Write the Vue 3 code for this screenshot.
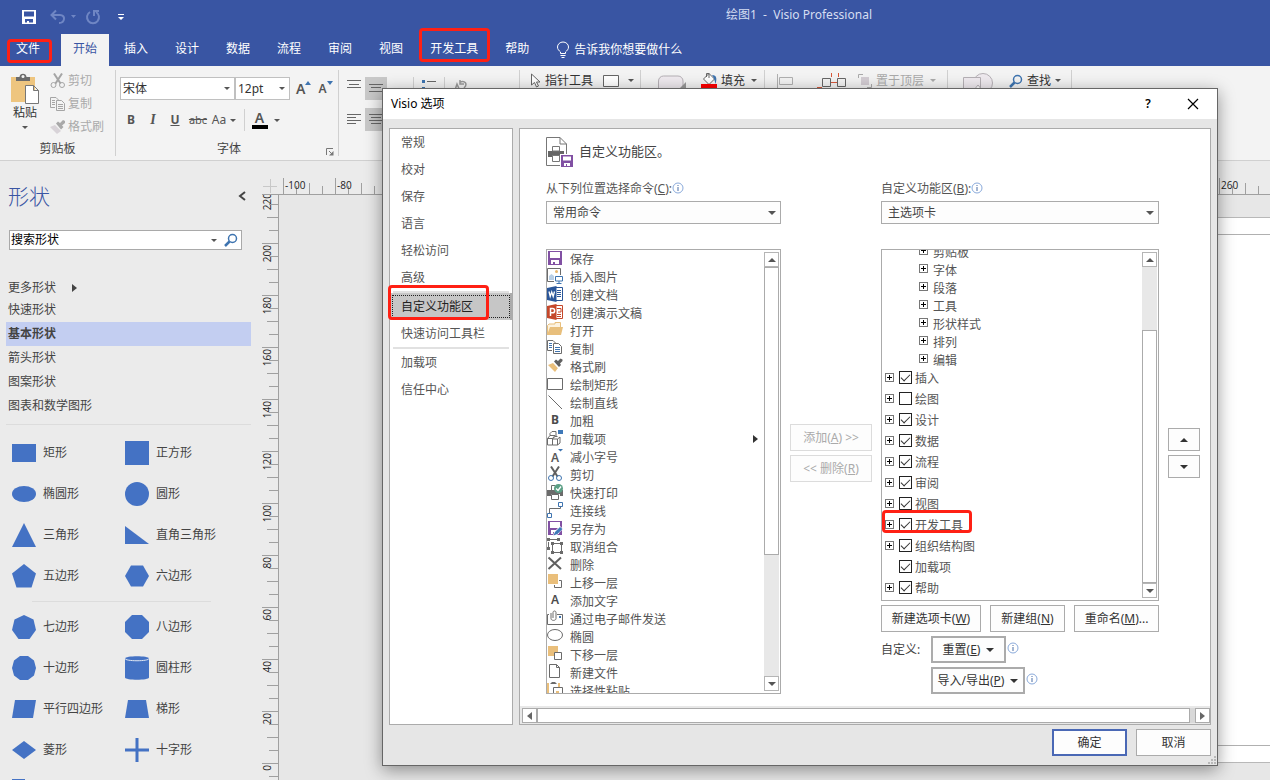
<script setup>
import { ref } from 'vue'

const tabs = ['文件', '开始', '插入', '设计', '数据', '流程', '审阅', '视图', '开发工具', '帮助']
const marked = ['文件', '开发工具']

const stencils = ['快速形状', '基本形状', '箭头形状', '图案形状', '图表和数学图形']

const shapesTop = [
  { name: '矩形', svg: '<rect x="1" y="4" width="24" height="18"/>' },
  { name: '正方形', svg: '<rect x="1" y="1" width="24" height="24"/>' },
  { name: '椭圆形', svg: '<ellipse cx="13" cy="13" rx="12" ry="8"/>' },
  { name: '圆形', svg: '<circle cx="13" cy="13" r="12"/>' },
  { name: '三角形', svg: '<path d="M13 1 25 25H1z"/>' },
  { name: '直角三角形', svg: '<path d="M1 4 25 22H1z"/>' },
  { name: '五边形', svg: '<path d="M13 1 25 10.500 20.500 24.500H5.500L1 10.500z"/>' },
  { name: '六边形', svg: '<path d="M7 2.500H19L25 13 19 23.500H7L1 13z"/>' },
]
const shapesBottom = [
  { name: '七边形', svg: '<path d="M13 1 22.500 5.500 25 16 18.500 25H7.500L1 16 3.500 5.500z"/>' },
  { name: '八边形', svg: '<path d="M8 1H18L25 8V18L18 25H8L1 18V8z"/>' },
  { name: '十边形', svg: '<path d="M9 1H17L23 5.500 25 13 23 20.500 17 25H9L3 20.500 1 13 3 5.500z"/>' },
  { name: '圆柱形', svg: '<path d="M1 3.500C1 .5 25 .5 25 3.500V22.500C25 25.500 1 25.500 1 22.500z"/><path d="M1 3.500C1 6.500 25 6.500 25 3.500" fill="none" stroke="#dfe6f2" stroke-width="1"/>' },
  { name: '平行四边形', svg: '<path d="M4 4H25L22 22H1z"/>' },
  { name: '梯形', svg: '<path d="M4 4H22L25 22H1z"/>' },
  { name: '菱形', svg: '<path d="M13 4 25 13 13 22 1 13z"/>' },
  { name: '十字形', svg: '<path d="M11.500 1H14.500V11.500H25V14.500H14.500V25H11.500V14.500H1V11.500H11.500z"/>' },
  { name: '', svg: '<rect x="1" y="1" width="13" height="22"/>' },
]

const hTicks = Array.from({ length: 100 }, (_, i) => ({ x: 4.5 + i * 13, h: [17, 9, 12, 9][i % 4] }))
const hLabels = [-100, -80, 260].map((t) => ({ t, x: 6 + ((t + 100) / 20) * 52 }))
const vTicks = Array.from({ length: 60 }, (_, i) => ({ y: -3.5 + i * 13, w: [16, 9, 11, 9][i % 4] }))
const vLabels = Array.from({ length: 12 }, (_, i) => ({ y: -2 + i * 52, t: 220 - i * 20 }))

const navItems = [
  { t: '常规' }, { t: '校对' }, { t: '保存' }, { t: '语言' }, { t: '轻松访问' }, { t: '高级', sep: true },
  { t: '自定义功能区', on: true }, { t: '快速访问工具栏', sep: true }, { t: '加载项' }, { t: '信任中心' },
]

const floppy = '<path fill="#8150a3" fill-rule="evenodd" d="M1 1H15V15H1zM3 2V8H13V2zM4 10V14H6V12H8V14H12V10z"/>'
const commands = [
  { t: '保存', i: floppy },
  { t: '插入图片', i: '<path d="M7 13.500H.5V.5H13.500V7" stroke="#6b6b6b"/><circle cx="9.500" cy="3.500" r="1.500" fill="#eab76c"/><path d="M2 12V8L4.500 6 7 8V12z" fill="#b9cfe6"/><path d="M8.500 8.500H15.500V13H8.500zM12 13V15.500M9.500 15.500H14.500" stroke="#3e74b0" fill="#fff"/>' },
  { t: '创建文档', i: '<path d="M9 1.500H15.500V14.500H9" stroke="#2a5699" fill="#fff"/><path d="M10 4.500H14M10 6.500H14M10 8.500H14M10 10.500H14" stroke="#2a5699"/><path d="M0 2 9.500 0V16L0 14z" fill="#2a5699"/><path d="M2 5.500 3.200 10.500 4.700 6 6.200 10.500 7.500 5.500" stroke="#fff" stroke-width="1.300"/>' },
  { t: '创建演示文稿', i: '<path d="M9 1.500H15.500V14.500H9" stroke="#c5472a" fill="#fff"/><path d="M10 4.500H14V8H11M10 10.500H14M10 12.500H14" stroke="#c5472a"/><path d="M0 2 9.500 0V16L0 14z" fill="#c5472a"/><path d="M3.500 12V4.500H5.500a2 2 0 0 1 0 4.300H3.500" stroke="#fff" stroke-width="1.500"/>' },
  { t: '打开', i: '<path d="M.5 13V3.500L2 2H8V.5H13.500V5" stroke="#e8bf7c" fill="#fdf3e0"/><path d="M0 13 3 5H16L14 13z" fill="#e8bf7c"/>' },
  { t: '复制', i: '<path d="M5 10.500H.5V.5H6L8.500 3" stroke="#6b6b6b"/><path d="M2 3.500H5M2 5.500H5M2 7.500H5" stroke="#3e74b0"/><path d="M6.500 3.500H11.500L14.500 6.500V13.500H6.500z" stroke="#6b6b6b" fill="#fff"/><path d="M8 7.500H13M8 9.500H13M8 11.500H13" stroke="#3e74b0"/>' },
  { t: '格式刷', i: '<path d="M1 7 6 5 11 10 8 14z" fill="#eabf7b"/><path d="M6 4 8 3 13 8 11 10z" fill="#fff"/><path d="M7 3.500 9 1.500 11 3 13.500 .5 15.500 1.500 15.500 3 13 5.500 14 7 12 9z" fill="#606060"/>' },
  { t: '绘制矩形', i: '<path d="M.5 2.500H15.500V13.500H.5z" stroke="#6b6b6b"/>' },
  { t: '绘制直线', i: '<path d="M1.500 1.500 15 15" stroke="#6b6b6b"/>' },
  { t: '加粗', i: '<text x="4" y="12" font-size="12" font-weight="700" fill="#4c4c4c">B</text>' },
  { t: '加载项', sub: true, i: '<path d="M.5 8.500H5.500V15H.5zM5.500 9H10.500V15H5.500M.5 8.500 3 5.500V3.500L5 1.500H9V6M3 5.500H8L5.500 8.500M10.500 9 13 7V13L10.500 15M5.500 9 8 6.500H10.500" stroke="#6b6b6b"/><rect x="11" y="0" width="5" height="4" fill="#3e78b8"/>' },
  { t: '减小字号', i: '<text x="4" y="14" font-size="12" font-weight="600" fill="#5a5a5a">A</text><path d="M11 1H16L13.500 3.500z" fill="#3e74b0"/>' },
  { t: '剪切', i: '<path d="M4 .5 10.500 10.500M12 .5 5.500 10.500" stroke="#5f5f5f" stroke-width="2"/><circle cx="4" cy="12" r="2.500" stroke="#3e74b0"/><circle cx="12" cy="12" r="2.500" stroke="#3e74b0"/>' },
  { t: '快速打印', i: '<path d="M4.500 6V1.500H8" stroke="#6b6b6b"/><path d="M0 6H16V12H13V10H4V12H0z" fill="#6b6b6b"/><path d="M4.500 10.500H11.500V15.500H4.500z" stroke="#6b6b6b" fill="#fff"/><circle cx="11.500" cy="4.500" r="4.500" fill="#5b9f85"/><path d="M9 4.500 11 6.500 14 2.500" stroke="#fff" stroke-width="1.300"/>' },
  { t: '连接线', i: '<path d="M2.500 11V6.500H13.500V5" stroke="#6b6b6b"/><path d="M.5 11.500H4.500V15.500H.5zM11.500 .5H15.500V4.500H11.500z" stroke="#3e74b0"/>' },
  { t: '另存为', i: floppy + '<path d="M6 16 7 12 13 6 16 9 10 15z" fill="#fff"/><path d="M6.500 15.500 8 12 13 7 15.500 9 10.500 14z" fill="#3e78b8"/>' },
  { t: '取消组合', i: '<path d="M5 1.500H11M1.500 4V10M2 1.500H11M11.500 1V3" stroke="#6b6b6b"/><path d="M5.500 5.500H14.500V14.500H5.500z" stroke="#6b6b6b"/><path d="M0 0H3V3H0zM10 0H13V3H10zM0 9H3V12H0zM4 4H7V7H4zM13 4H16V7H13zM4 13H7V16H4zM13 13H16V16H13z" fill="#6b6b6b"/>' },
  { t: '删除', i: '<path d="M1.500 1.500 14 13M14 1.500 1.500 13" stroke="#606060" stroke-width="2"/>' },
  { t: '上移一层', i: '<rect x="1" y="0" width="10" height="10" fill="#eabf7b"/><path d="M12 6.500H14.500V13.500H7.500V11" stroke="#6b6b6b"/>' },
  { t: '添加文字', i: '<text x="4" y="12" font-size="12" font-weight="600" fill="#4c4c4c">A</text>' },
  { t: '通过电子邮件发送', i: '<path d="M2 4.500H.5V14.500H15.500V4.500H10" stroke="#6b6b6b"/><path d="M4 3V8.500C4 11 9 11 9 8.500V2.500C9 .5 6 .5 6 2.500V8" stroke="#6b6b6b"/><rect x="12" y="6" width="2" height="2" fill="#3e74b0"/>' },
  { t: '椭圆', i: '<ellipse cx="8" cy="7" rx="7.500" ry="5.500" stroke="#6b6b6b"/>' },
  { t: '下移一层', i: '<rect x="1" y="0" width="10" height="10" fill="#eabf7b"/><path d="M7.500 6.500H14.500V13.500H7.500z" stroke="#6b6b6b" fill="#fff"/>' },
  { t: '新建文件', i: '<path d="M2.500 .5H9.500L12.500 3.500V13.500H2.500zM9.500 .5V3.500H12.500" stroke="#6b6b6b"/>' },
  { t: '选择性粘贴', i: '<path d="M0 1H2V12H0zM11 1H13V5H11z" fill="#eabf7b"/><path d="M3 2 5 0H8L10 2z" fill="#6b6b6b"/><path d="M6.500 5.500H15.500V13H6.500z" stroke="#6b6b6b" fill="#fff"/><path d="M9 9H12V11H9z" fill="#eabf7b"/>' },
]

const groups = ['剪贴板', '字体', '段落', '工具', '形状样式', '排列', '编辑']
const tree = ref([
  { t: '插入', on: true }, { t: '绘图', on: false }, { t: '设计', on: true }, { t: '数据', on: true },
  { t: '流程', on: true }, { t: '审阅', on: true }, { t: '视图', on: true }, { t: '开发工具', on: true, mark: true },
  { t: '组织结构图', on: true }, { t: '加载项', on: true, leaf: true }, { t: '帮助', on: true },
])
const font = ref('宋体')
const size = ref('12pt')
const search = ref('搜索形状')
const source = ref('常用命令')
const target = ref('主选项卡')
</script>

<template>
  <div class="app">
    <header class="titlebar">
      <div class="qat">
        <button class="ico" aria-label="保存">
          <svg width="16" height="16" viewBox="0 0 16 16"><path fill="#fff" fill-rule="evenodd" d="M1 1H15V15H1zM3 2.500V7.500H13V2.500zM4 10V13.500H6V12H8V13.500H12V10z" /></svg>
        </button>
        <button class="ico undo" aria-label="撤消">
          <svg width="28" height="16" viewBox="0 0 28 16" fill="none" stroke="#6f86c4" stroke-width="2"><path d="M2 6H10C16 6 15 14 9 14M6 1.500 1.500 6 6 10.500" /><path d="M21 6H26L23.500 9z" fill="#6f86c4" stroke="none" /></svg>
        </button>
        <button class="ico redo" aria-label="恢复">
          <svg width="16" height="16" viewBox="0 0 16 16" fill="none" stroke="#6f86c4" stroke-width="2"><path d="M5 3A6 6 0 1 0 11 3M9 7V2H14" /></svg>
        </button>
        <button class="ico custom" aria-label="自定义快速访问工具栏">
          <svg width="8" height="8" viewBox="0 0 8 8" fill="#fff"><path d="M1 1H7V2H1zM1 4H7L4 7z" /></svg>
        </button>
      </div>
      <h1>绘图1 &nbsp;-&nbsp; Visio Professional</h1>
    </header>

    <nav class="tabs">
      <button v-for="t in tabs" :key="t" :class="{ active: t === '开始', file: t === '文件' }">
        {{ t }}<i v-if="marked.includes(t)" class="mark" :class="t === '文件' ? 'mark-file' : 'mark-dev'"></i>
      </button>
      <button class="tell">
        <svg width="14" height="18" viewBox="0 0 14 18" fill="none" stroke="#fff"><path d="M4.500 12.500V11C3 9.500 1.500 8.500 1.500 6a5.500 5 0 0 1 11 0C12.500 8.500 11 9.500 9.500 11V12.500zM4.500 14.500H9.500M5.500 16.500H8.500" /></svg>
        告诉我你想要做什么
      </button>
    </nav>

    <section class="ribbon">
      <div class="group clip">
        <div class="clip-body">
          <button class="paste">
            <svg width="30" height="32" viewBox="0 0 30 32"><path d="M1 4H25V29H1z" fill="#eec57f" /><path d="M6 8V4H9.500C9.500-.5 16.500-.5 16.500 4H20V8z" fill="#6b6b6b" /><circle cx="13" cy="3.500" r="1.500" fill="#f3f3f3" /><path d="M15.500 12.500H23.500L28.500 17.500V30.500H15.500zM23.500 12.500V17.500H28.500" fill="#fff" stroke="#777" /></svg>
            <span>粘贴</span><b class="caret"></b>
          </button>
          <div class="cmds">
            <button disabled><svg width="16" height="16" viewBox="0 0 16 16" fill="none" stroke="#a5a5a5"><path d="M4 .5 10.500 10.500M12 .5 5.500 10.500" stroke-width="2" /><circle cx="3.500" cy="12" r="2.500" /><circle cx="12" cy="12" r="2.500" /></svg>剪切</button>
            <button disabled><svg width="16" height="16" viewBox="0 0 16 16" fill="none" stroke="#a5a5a5"><path d="M5 11.500H.5V1.500H6L8.500 4M2 4.500H5M2 6.500H5M2 8.500H5M6.500 4.500H11.500L14.500 7.500V14.500H6.500zM8 8.500H13M8 10.500H13M8 12.500H13" /></svg>复制</button>
            <button disabled><svg width="16" height="16" viewBox="0 0 16 16"><path d="M0 8 5 6 11 12 7 15z" fill="#d8d3d8" /><path d="M6 4.500 8 2.500 10 4 13 1 15 2 15 4 12 6.500 13.500 8 11 10.500z" fill="#a9a9a9" /></svg>格式刷</button>
          </div>
        </div>
        <div class="gname">剪贴板</div>
      </div>

      <div class="group fontg">
        <div class="frow">
          <label class="combo cfont"><select v-model="font" aria-label="字体"><option>宋体</option></select></label>
          <label class="combo csize"><select v-model="size" aria-label="字号"><option>12pt</option></select></label>
          <button class="grow" aria-label="增大字号">A<svg width="6" height="4"><path d="M0 4H6L3 0z" fill="#3e74b0" /></svg></button>
          <button class="grow small" aria-label="减小字号">A<svg width="6" height="4"><path d="M0 0H6L3 4z" fill="#3e74b0" /></svg></button>
        </div>
        <div class="frow2">
          <button><b>B</b></button><button><em>I</em></button><button><u><b>U</b></u></button>
          <button class="abc"><s>abc</s></button><button class="aa">Aa<b class="caret"></b></button>
          <button class="fcolor"><span>A</span><b class="caret"></b></button>
        </div>
        <div class="gname">字体<svg class="launch" width="8" height="8" viewBox="0 0 8 8" fill="none" stroke="#777"><path d="M.5 7V.5H7M3 3 6 6" /><path d="M7.500 3V7.500H3z" fill="#777" stroke="none" /></svg></div>
      </div>

      <div class="group para">
        <div class="prow">
          <button aria-label="顶端对齐"><svg width="16" height="17" stroke="#666"><path d="M1 .5H15M3 4.500H13M1 7.500H15" /></svg></button>
          <button class="on" aria-label="中部对齐"><svg width="16" height="17" stroke="#666"><path d="M1 4.500H15M3 7.500H13M1 11.500H15" /></svg></button>
          <i class="vsep"></i>
          <button class="bul" aria-label="项目符号"><svg width="16" height="17" fill="#3e74b0"><path d="M1 0H4V3H1zM1 7H4V10H1z" /><path d="M6 1.500H15M6 8.500H15" stroke="#666" /></svg></button>
          <i class="vsep"></i>
          <button aria-label="旋转文字"><svg width="16" height="17" fill="none" stroke="#999"><path d="M2 13 5 4 8 11M8 2C13 0 16 4 12 8M8 0V4H12" stroke-width="1.500" /></svg></button>
        </div>
        <div class="prow low">
          <button aria-label="左对齐"><svg width="16" height="14" stroke="#666"><path d="M1 1.500H15M1 4.500H10M1 7.500H15M1 10.500H10" /></svg></button>
          <button class="on" aria-label="居中"><svg width="16" height="14" stroke="#666"><path d="M1 1.500H15M3 4.500H13M1 7.500H15M3 10.500H13" /></svg></button>
        </div>
      </div>

      <div class="group tools">
        <div class="line">
          <button><svg width="12" height="16" viewBox="0 0 12 16" fill="#fff" stroke="#666"><path d="M1.500 1V12L4.500 9.500 6.500 14 8.500 13 6.500 9H10z" /></svg>指针工具</button>
          <button class="sq" aria-label="矩形"><svg width="16" height="12"><path d="M.5 .5H15.500V11.500H.5z" fill="#fff" stroke="#666" /></svg><b class="caret"></b></button>
        </div>
      </div>

      <div class="group style">
        <div class="line">
          <button class="round" aria-label="快速样式"><svg width="30" height="18" viewBox="0 0 30 18"><path d="M1.500 18V9a5 5 0 0 1 5-5H21a5 5 0 0 1 5 5V18" fill="#efeaef" stroke="#b5b0b5" /><path d="M29 10V18H21z" fill="#999" /></svg></button>
          <button><svg width="18" height="18" viewBox="0 0 18 18"><path d="M3.500 7 9 1.500 14.500 7 9 12.500z" fill="#fff" stroke="#666" /><path d="M6.500 5V1.500H9V6" fill="none" stroke="#666" /><path d="M12 3C17 3 17 7 15.500 12 14.500 8 14 6 12 3" fill="#3e74b0" /><path d="M1 12H17V18H1z" fill="#f00" /></svg>填充<b class="caret"></b></button>
        </div>
      </div>

      <div class="group arrange">
        <div class="line">
          <button aria-label="对齐"><svg width="18" height="16" fill="none" stroke="#b0b0b0"><path d="M1.500 1V16M3.500 4.500H16.500V11.500H3.500z" /></svg></button>
          <button class="pos" aria-label="位置"><svg width="32" height="18" viewBox="0 0 32 18" fill="none" stroke="#666"><path d="M14 10.500H20M14.500 1V5M21.500 1V5M0 15.500H5M10.500 16V18" stroke="#d8583a" /><path d="M5.500 6.500H13.500V14.500H5.500zM20.500 6.500H28.500V14.500H20.500z" /></svg></button>
          <button disabled><svg width="16" height="16" viewBox="0 0 16 16" fill="none" stroke="#aaa"><path d="M1.500 5V1.500H6M14.500 11V14.500H10" /><path d="M4 4H12V12H4z" fill="#d3cdd3" stroke="none" /></svg>置于顶层<b class="caret"></b></button>
        </div>
      </div>

      <div class="group edit">
        <div class="line">
          <button aria-label="更改形状"><svg width="32" height="18" viewBox="0 0 32 18" fill="#efeaef" stroke="#b5b0b5"><circle cx="20" cy="11" r="9.500" /><path d="M.5 5.500H17.500V18H.5z" /><path d="M11 18 15 13 19 18z" fill="#fff" /></svg></button>
          <button class="find"><svg width="14" height="14" viewBox="0 0 14 14" fill="none" stroke="#3e74b0"><circle cx="8.500" cy="5.500" r="4" stroke-width="1.500" /><path d="M5.500 8.500 1 13" stroke-width="2.500" /></svg>查找<b class="caret"></b></button>
        </div>
      </div>
    </section>

    <main class="workspace">
      <aside class="pane">
        <div class="pane-head"><h2>形状</h2><button aria-label="最小化形状窗口"><svg width="8" height="10" fill="none" stroke="#444" stroke-width="2"><path d="M7 1 2 5 7 9" /></svg></button></div>
        <div class="search">
          <input v-model="search" aria-label="搜索形状" />
          <b class="caret"></b>
          <button aria-label="搜索"><svg width="14" height="14" viewBox="0 0 14 14" fill="none" stroke="#3e74b0"><circle cx="8.500" cy="5.500" r="4" stroke-width="1.500" /><path d="M5.500 8.500 1 13" stroke-width="2.500" /></svg></button>
        </div>
        <button class="more">更多形状<svg width="5" height="8"><path d="M0 0V8L5 4z" fill="#444" /></svg></button>
        <ul class="stencils"><li v-for="s in stencils" :key="s" :class="{ sel: s === '基本形状' }">{{ s }}</li></ul>
        <div class="shapes">
          <div v-for="s in shapesTop" :key="s.name" class="shape"><svg width="26" height="26" fill="#4472c4" v-html="s.svg"></svg>{{ s.name }}</div>
        </div>
        <hr />
        <div class="shapes second">
          <div v-for="s in shapesBottom" :key="s.name" class="shape"><svg width="26" height="26" fill="#4472c4" v-html="s.svg"></svg>{{ s.name }}</div>
        </div>
      </aside>

      <div class="drawing">
        <svg class="corner" width="17" height="17" stroke="#c8c8c8"><path d="M1 8.500H15M8.500 1V15" /><path d="M0 16.500H17" stroke="#a0a0a0" /></svg>
        <svg class="hruler" width="100%" height="17">
          <path d="M0 16.500H2000" stroke="#a0a0a0" />
          <line v-for="k in hTicks" :key="k.x" :x1="k.x" :x2="k.x" :y1="17 - k.h" y2="17" stroke="#a0a0a0" />
          <text v-for="l in hLabels" :key="l.t" :x="l.x" y="11" class="rl">{{ l.t }}</text>
        </svg>
        <svg class="vruler" width="17" height="100%">
          <path d="M16.500 0V2000" stroke="#a0a0a0" />
          <line v-for="k in vTicks" :key="k.y" :x1="16 - k.w" x2="16" :y1="k.y" :y2="k.y" stroke="#a0a0a0" />
          <text v-for="l in vLabels" :key="l.t" text-anchor="end" :transform="`translate(9 ${l.y}) rotate(-90)`" class="rl">{{ l.t }}</text>
        </svg>
        <div class="canvas"><div class="sheet"><div class="page"></div></div></div>
      </div>
    </main>

    <div class="dialog" role="dialog" aria-labelledby="dlg-title">
      <div class="dlg-title">
        <span id="dlg-title">Visio 选项</span>
        <button class="help" aria-label="帮助">?</button>
        <button class="close" aria-label="关闭"><svg width="12" height="12" stroke="#000" stroke-width="1.200"><path d="M1 1 11 11M11 1 1 11" /></svg></button>
      </div>

      <div class="dlg-body">
        <ul class="nav">
          <li v-for="n in navItems" :key="n.t" :class="{ sep: n.sep }">
            <button :class="{ on: n.on }">{{ n.t }}</button>
            <i v-if="n.on" class="mark mark-nav"></i>
          </li>
        </ul>

        <div class="content">
          <div class="scrollarea">
            <div class="heading">
              <svg width="28" height="31" viewBox="0 0 28 31" fill="none" stroke="#777"><path d="M15 28.500H.5V.5H14L20.500 7V17M14 .5V7H20.500" /><path d="M2 14H18V20H2z" fill="#666" stroke="none" /><path d="M6.500 9.500H13.500V14H6.500zM6.500 18.500H13.500V24.500H6.500z" fill="#fff" /><path d="M14 17H28V31H14z" fill="#fff" stroke="none" /><path fill="#8150a3" stroke="none" fill-rule="evenodd" d="M15 18H27V30H15zM17 19.500V23.500H25V19.500zM18 26V29H20V27H21V29H24V26z" /></svg>
              <h3>自定义功能区。</h3>
            </div>

            <div class="cols">
              <div class="col">
                <div class="lab"><label for="src">从下列位置选择命令(<u>C</u>):</label><svg class="info" width="12" height="12"><use href="#info" /></svg></div>
                <div class="combo big"><select id="src" v-model="source"><option>常用命令</option></select></div>
                <div class="list">
                  <ul class="items">
                    <li v-for="c in commands" :key="c.t"><svg width="16" height="16" fill="none" v-html="c.i"></svg><span>{{ c.t }}</span><svg v-if="c.sub" class="sub" width="5" height="8"><path d="M0 0V8L5 4z" fill="#333" /></svg></li>
                  </ul>
                  <div class="vsb"><button aria-label="向上滚动"><b class="caret up"></b></button><span class="thumb left"></span><span class="rest"></span><button aria-label="向下滚动"><b class="caret"></b></button></div>
                </div>
              </div>

              <div class="mid">
                <button disabled>添加(<u>A</u>) &gt;&gt;</button>
                <button disabled>&lt;&lt; 删除(<u>R</u>)</button>
              </div>

              <div class="col">
                <div class="lab"><label for="dst">自定义功能区(<u>B</u>):</label><svg class="info" width="12" height="12"><use href="#info" /></svg></div>
                <div class="combo big"><select id="dst" v-model="target"><option>主选项卡</option></select></div>
                <div class="list">
                  <ul class="tree">
                    <li v-for="g in groups" :key="g" class="g"><i class="plus"></i><span>{{ g }}</span></li>
                    <li v-for="n in tree" :key="n.t" class="t">
                      <i class="plus" :class="{ none: n.leaf }"></i>
                      <label><input v-model="n.on" type="checkbox" /><span>{{ n.t }}</span></label>
                      <i v-if="n.mark" class="mark mark-tree"></i>
                    </li>
                  </ul>
                  <div class="vsb"><button aria-label="向上滚动"><b class="caret up"></b></button><span class="gap"></span><span class="thumb right"></span><button aria-label="向下滚动"><b class="caret"></b></button></div>
                </div>
                <div class="acts"><button class="w1">新建选项卡(<u>W</u>)</button><button class="w2">新建组(<u>N</u>)</button><button class="w3">重命名(<u>M</u>)...</button></div>
                <div class="acts2">
                  <span>自定义:</span>
                  <div><button class="w2 thick"><span>重置(<u>E</u>)</span><b class="caret big-caret"></b></button><svg class="info" width="12" height="12"><use href="#info" /></svg></div>
                  <div class="second-row"><button class="w4 thick"><span>导入/导出(<u>P</u>)</span><b class="caret big-caret"></b></button><svg class="info" width="12" height="12"><use href="#info" /></svg></div>
                </div>
              </div>

              <div class="updown">
                <button aria-label="上移"><b class="caret up"></b></button>
                <button aria-label="下移"><b class="caret"></b></button>
              </div>
            </div>
          </div>
          <div class="hsb"><button aria-label="向左滚动"><svg width="5" height="8"><path d="M5 0V8L0 4z" fill="#666" /></svg></button><span class="hthumb"></span><i></i><button aria-label="向右滚动"><svg width="5" height="8"><path d="M0 0V8L5 4z" fill="#666" /></svg></button></div>
        </div>
      </div>

      <div class="dlg-foot"><button class="ok">确定</button><button>取消</button></div>
      <svg class="grip" width="9" height="9" fill="#b8b8b8"><path d="M6 0H8V2H6zM3 3H5V5H3zM6 3H8V5H6zM0 6H2V8H0zM3 6H5V8H3zM6 6H8V8H6z" /></svg>
    </div>

    <svg class="defs" width="0" height="0"><symbol id="info" viewBox="0 0 12 12"><circle cx="6" cy="6" r="5" fill="#fff" stroke="#8aaadb" /><path d="M5.500 3H6.500V4H5.500zM5.500 5H6.500V9H5.500z" fill="#4a6ea8" /></symbol></svg>
  </div>
</template>

<style>
html, body { margin: 0; overflow: hidden; }
</style>

<style scoped>
.app { position: relative; display: flex; flex-direction: column; height: 100vh; overflow: hidden; background: #ebebeb; color: #444; font: 12px/18px "Noto Sans", "Noto Sans CJK SC", sans-serif; }
.app * { box-sizing: border-box; }
button, select, input { font: inherit; color: inherit; padding: 0; margin: 0; border: 0; background: none; border-radius: 0; }
button { display: flex; align-items: center; justify-content: center; white-space: nowrap; }
h1, h2, h3, ul { margin: 0; padding: 0; font-weight: 400; font-size: 12px; list-style: none; }
svg { display: block; flex: none; }
.defs { position: absolute; }
.caret { flex: none; width: 0; height: 0; border: 3px solid transparent; border-top-color: #555; border-bottom-width: 0; }
.caret.up { border-bottom: 4px solid #555; border-top-width: 0; }
.mark { position: absolute; border: 3px solid #ff2014; border-radius: 4px; pointer-events: none; z-index: 2; }

.titlebar { display: flex; align-items: center; height: 34px; background: #3955a3; color: #d6def2; }
.titlebar h1 { flex: 1; text-align: center; padding-bottom: 4px; }
.qat { display: flex; align-items: center; width: 328px; padding-left: 21px; }
.undo { margin-left: 13px; }
.redo { margin-left: 7px; }
.custom { margin-left: 16px; }

.tabs { display: flex; gap: 3px; height: 32px; padding-left: 4px; background: #3955a3; color: #fff; }
.tabs button { position: relative; padding: 0 12px 2px; }
.tabs .file { margin-right: 6px; }
.tabs .active { background: #f3f3f3; color: #3955a3; }
.tabs .tell { gap: 4px; padding: 0 12px; }
.mark-file { inset: 5px 0 3px 3px; }
.mark-dev { inset: -6px 0 4px 1px; }

.ribbon { display: flex; height: 95px; flex: none; background: #f3f3f3; border-bottom: 1px solid #d0d0d0; padding: 4px 0; }
.group { position: relative; display: flex; flex-direction: column; border-right: 1px solid #d0d0d0; overflow: hidden; }
.gname { margin-top: auto; text-align: center; line-height: 14px; }
.group button { color: #333; }
.clip { width: 116px; }
.clip-body { display: flex; height: 68px; }
.paste { flex-direction: column; justify-content: flex-start; width: 50px; padding-top: 3px; }
.paste span { line-height: 16px; }
.paste .caret { margin-top: 5px; }
.cmds { display: flex; flex-direction: column; gap: 5px; padding-top: 2px; }
.cmds button { gap: 2px; justify-content: flex-start; }
.group button:disabled { color: #aaa; }
button:disabled .caret { border-top-color: #aaa; }
.fontg { width: 223px; padding-left: 4px; }
.frow { display: flex; padding-top: 7px; }
.combo { position: relative; display: flex; height: 23px; border: 1px solid #c0c0c0; background: #fff; }
.combo::after { content: ""; position: absolute; right: 4px; top: 9px; border: 3px solid transparent; border-top-color: #555; border-bottom-width: 0; }
.combo select { appearance: none; width: 100%; padding-left: 2px; outline: none; color: #333; }
.cfont { width: 115px; }
.csize { width: 55px; }
.grow { align-items: flex-start; margin-left: 6px; font-size: 14px; font-weight: 600; line-height: 24px; }
.grow.small { font-size: 12px; margin-left: 7px; }
.group .grow { color: #555; }
.grow svg { margin-top: 4px; }
.frow2 { display: flex; padding-top: 8px; }
.frow2 button { width: 22px; height: 22px; font-size: 12px; color: #555; }
.frow2 em { font-family: "Liberation Serif", serif; font-size: 14px; font-weight: 700; }
.frow2 .abc { font-size: 11px; width: 24px; }
.frow2 .aa { width: 28px; gap: 4px; margin-right: 6px; }
.frow2 .fcolor { width: 36px; gap: 6px; border-left: 1px solid #d0d0d0; padding-left: 6px; }
.fcolor span { width: 16px; line-height: 14px; font-size: 14px; font-weight: 600; border-bottom: 4px solid #000; }
.launch { position: absolute; right: 4px; bottom: 0; }
.para { width: 181px; padding-left: 4px; }
.prow { display: flex; padding-top: 7px; height: 30px; }
.prow.low { padding-top: 8px; height: 32px; }
.prow button { width: 22px; height: 23px; }
.prow .on { background: #c8c8c8; }
.prow .vsep { width: 1px; height: 40px; background: #d0d0d0; margin: 0 4px 0 26px; }
.bul + .vsep { margin-left: 4px; }
.prow .bul + .vsep { margin-left: 4px; }
.line { display: flex; align-items: center; height: 21px; }
.line button { gap: 3px; height: 18px; }
.tools { width: 121px; padding-left: 10px; }
.line .sq { margin-left: 10px; gap: 6px; }
.style { width: 124px; padding-left: 16px; }
.round { margin-right: 13px; }
.line .caret { margin-left: 3px; }
.arrange { width: 183px; padding-left: 11px; }
.pos { margin: 0 8px 0 23px; }
.edit { width: 124px; padding-left: 15px; }
.line .find { margin-left: 14px; gap: 4px; }
.line .find .caret { margin-left: 0; }

.workspace { flex: 1; min-height: 0; display: flex; overflow: hidden; }
.pane { width: 262px; flex: none; padding: 0 11px 0 6px; }
.pane-head { display: flex; justify-content: space-between; align-items: center; height: 69px; padding: 0 5px 0 2px; }
.pane-head h2 { font-size: 21px; line-height: 30px; color: #3955a3; font-weight: 300; }
.search { display: flex; align-items: center; height: 20px; margin: 0 9px 0 3px; border: 1px solid #a9a9a9; background: #fff; }
.search input { flex: 1; min-width: 0; height: 18px; padding-left: 1px; color: #000; outline: none; }
.search button { width: 20px; margin-left: 4px; }
.more { gap: 16px; height: 21px; margin-top: 27px; padding-left: 2px; }
.stencils li { height: 24px; line-height: 24px; padding-left: 2px; }
.stencils .sel { background: #c3cef1; font-weight: 700; }
.stencils { padding-bottom: 6px; border-bottom: 1px solid #dcdcdc; }
.shapes { display: grid; grid-template-columns: 113px 1fr; grid-auto-rows: 41px; padding: 7px 0 0 5px; }
.shape { display: flex; align-items: center; gap: 6px; white-space: nowrap; }
.pane hr { border: 0; height: 1px; background: #dcdcdc; margin: 5px 40px 0 26px; }
.shapes.second { padding-top: 4px; }

.drawing { flex: 1; min-width: 0; display: grid; grid-template: 17px minmax(0, 1fr) / 17px minmax(0, 1fr); padding-top: 17px; }
.rl { font: 10px "Open Sans", sans-serif; fill: #222; }
.canvas { background: #e7e7e7; padding: 22px 0 17px 120px; }
.sheet { height: 100%; background: #fff; border: 1px solid #b8b8b8; border-width: 1px 0; padding: 16px 0; }
.page { height: 100%; border: 1px solid #b0b0b0; border-width: 1px 0; }

.dialog { position: absolute; inset: 88px 52px 14px 382px; display: flex; flex-direction: column; background: #e6e6e6; border: 1px solid #666; box-shadow: 0 4px 16px rgba(0, 0, 0, 0.4); }
.dlg-title { display: flex; align-items: center; height: 30px; background: #fff; color: #000; padding: 0 8px; }
.dlg-title span { flex: 1; }
.dlg-title .help { width: 30px; height: 30px; font-weight: 600; margin-right: 14px; }
.dlg-title .close { width: 32px; height: 30px; }
.dlg-body { flex: 1; min-height: 0; display: flex; gap: 6px; padding: 9px 6px 0; }
.nav { width: 124px; flex: none; background: #fff; border: 1px solid #ababab; }
.nav li { position: relative; }
.nav button { width: 100%; height: 27px; padding-left: 11px; justify-content: flex-start; color: #555; }
.nav .sep::after { content: ""; display: block; height: 2px; margin: 0 3px; background: #e1e1e1; }
.nav .on { background: #c6c6c6; color: #222; border-right: 2px solid #ababab; outline: 1px dotted #222; outline-offset: -3px; }
.mark-nav { inset: -8px 23px 0 -2px; }

.content { flex: 1; min-width: 0; display: flex; flex-direction: column; background: #fff; border: 1px solid #ababab; }
.scrollarea { flex: 1; min-height: 0; display: flex; flex-direction: column; padding: 8px 10px 12px 26px; }
.heading { display: flex; align-items: center; gap: 5px; height: 31px; }
.heading h3 { font-size: 13px; padding-bottom: 4px; }
.cols { flex: 1; min-height: 0; display: grid; grid-template: minmax(0, 1fr) / 235fr 82px 278fr 32px; gap: 9px; padding-top: 11px; }
.col { display: flex; flex-direction: column; min-width: 0; }
.lab { display: flex; height: 22px; line-height: 20px; color: #555; white-space: nowrap; }
.lab .info { margin-top: 3px; }
.combo.big { border-color: #ababab; background: #fdfdfd; flex: none; }
.combo.big select { padding-left: 6px; color: #444; }
.combo.big::after { border-width: 4px 4px 0; top: 9px; }
.list { flex: 1; min-height: 0; display: flex; margin-top: 25px; border: 1px solid #ababab; overflow: hidden; padding-right: 1px; color: #555; }
.items, .tree { flex: 1; min-width: 0; }
.items li { display: flex; align-items: flex-start; height: 18px; gap: 7px; }
.items span { line-height: 20px; }
.items .sub { margin: 5px 6px 0 auto; }
.items text { font-family: "Open Sans", sans-serif; }
.vsb { display: flex; flex-direction: column; width: 15px; margin: 2px 0; background: #e8e8e8; }
.vsb button { flex: none; height: 15px; border: 1px solid #b5b5b5; background: #fff; }
.vsb .caret { border-width: 4px 4px 0; }
.vsb .caret.up { border-width: 0 4px 4px; }
.thumb { background: #fff; border: 1px solid #ababab; }
.thumb.left { flex: 287; }
.rest { flex: 122; }
.gap { flex: 63; }
.thumb.right { flex: 253; }
.tree { margin-top: -9px; }
.tree li { position: relative; display: flex; align-items: center; }
.tree .g { height: 18px; padding-left: 37px; gap: 5px; }
.tree .g span { padding-top: 5px; }
.tree .t { height: 21px; padding-left: 3px; gap: 5px; }
.tree span { padding-top: 2px; }
.tree label { display: flex; align-items: center; gap: 3px; }
.tree input { appearance: none; width: 13px; height: 13px; border: 1px solid #222; background: #fff; display: grid; place-items: center; }
.tree input:checked::before { content: ""; width: 8px; height: 4px; border: solid #333; border-width: 0 0 1px 1px; transform: translateY(-1px) rotate(-45deg); }
.plus { width: 9px; height: 9px; border: 1px solid #777; background: linear-gradient(#000, #000) center / 5px 1px no-repeat, linear-gradient(#000, #000) center / 1px 5px no-repeat, #fff; }
.plus.none { visibility: hidden; }
.mark-tree { top: -4px; left: 0; width: 90px; height: 23px; }
.mid { display: flex; flex-direction: column; gap: 4px; padding-top: 245px; }
.mid button { height: 27px; border: 1px solid #dcdcdc; background: #fdfdfd; color: #aaa; white-space: pre; }
.updown { display: flex; flex-direction: column; gap: 4px; padding-top: 249px; }
.updown button { height: 23px; border: 1px solid #ababab; background: #fdfdfd; }
.updown .caret { border-width: 4px 4px 0; border-top-color: #333; }
.updown .caret.up { border-width: 0 4px 4px; border-bottom-color: #333; }
.acts { display: flex; justify-content: space-between; padding-top: 4px; }
.acts button, .acts2 button { height: 27px; border: 1px solid #ababab; background: #fdfdfd; color: #333; }
.w1 { width: 100px; }
.w2 { width: 75px; }
.w3 { width: 85px; }
.w4 { width: 94px; }
.acts2 { display: grid; grid-template-columns: 50px 1fr; row-gap: 4px; align-items: center; padding-top: 4px; }
.acts2 div { display: flex; gap: 1px; }
.acts2 .second-row { grid-column: 2; }
.acts2 .info { margin-top: 6px; }
.acts2 .thick { border: 2px solid #ababab; gap: 6px; }
.acts2 .big-caret { border-width: 4px 4px 0; border-top-color: #333; }
.hsb { display: flex; height: 18px; background: #e8e8e8; padding: 2px 0 1px 2px; }
.hsb button { width: 15px; border: 1px solid #ababab; background: #fff; }
.hthumb { flex: 1; background: #fff; border: 1px solid #ababab; }
.hsb i { width: 5px; background: #d8d8d8; }
.dlg-foot { display: flex; justify-content: flex-end; gap: 9px; padding: 4px 6px 9px; }
.dlg-foot button { width: 75px; height: 27px; border: 1px solid #ababab; background: #fdfdfd; color: #333; }
.dlg-foot .ok { border: 2px solid #4a68b5; }
.grip { position: absolute; right: 0; bottom: 0; }
</style>
